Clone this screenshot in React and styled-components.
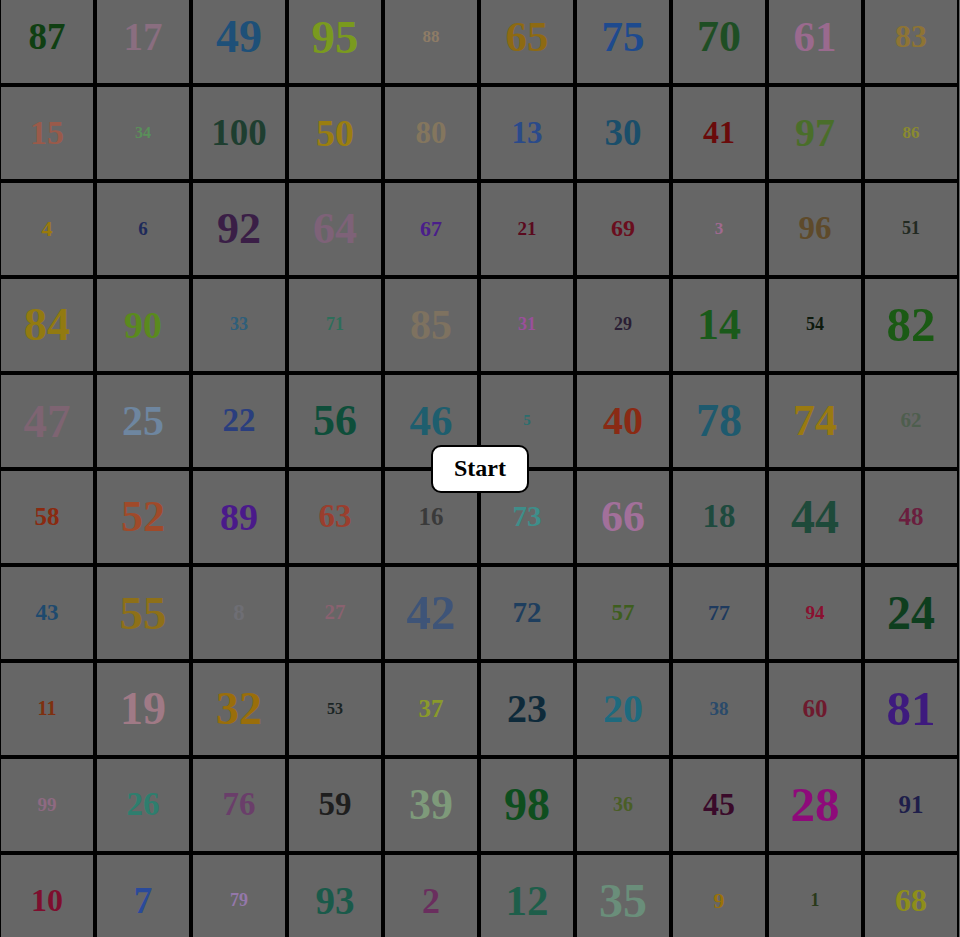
import React from 'react';
import styled, { createGlobalStyle } from 'styled-components';

const GlobalStyle = createGlobalStyle`
    html, body {
        margin: 0;
        padding: 0;
        height: 100%;
        overflow: hidden;
        background: #666666;
    }
`;

// [number, font size, colour] for each cell, row by row
const cells = [
    [87, 37, '#0f3f12'], [17, 39, '#8a6e80'], [49, 46, '#1e5078'], [95, 47, '#7a9a1e'], [88, 17, '#8e7c66'],
    [65, 43, '#8e6a12'], [75, 43, '#1e4a8e'], [70, 44, '#1e4e24'], [61, 43, '#9a6a8e'], [83, 32, '#8e7434'],

    [15, 34, '#9a5a4a'], [34, 16, '#5a905a'], [100, 37, '#1e3e30'], [50, 38, '#9a7e10'], [80, 31, '#84765e'],
    [13, 31, '#2a4a8a'], [30, 37, '#1a4e6a'], [41, 32, '#6a0a0a'], [97, 40, '#4a6e2a'], [86, 17, '#8a8a30'],

    [4, 22, '#9a7a0a'], [6, 19, '#1e2a5a'], [92, 44, '#3a1e46'], [64, 44, '#7e6278'], [67, 22, '#4a1e8a'],
    [21, 19, '#5a0a1e'], [69, 24, '#6a0e1e'], [3, 17, '#a06a90'], [96, 33, '#5e4a2a'], [51, 18, '#222a22'],

    [84, 46, '#927a10'], [90, 38, '#5a8a1e'], [33, 18, '#2e5e7a'], [71, 18, '#2e6e5a'], [85, 42, '#7e7260'],
    [31, 18, '#9a509a'], [29, 18, '#2a1e34'], [14, 44, '#1a5a1a'], [54, 18, '#0e1a0e'], [82, 49, '#1a5a14'],

    [47, 47, '#7e6472'], [25, 42, '#6e86a0'], [22, 33, '#2a3e7e'], [56, 44, '#0e4e3a'], [46, 43, '#1e5e6e'],
    [5, 15, '#2a6e6e'], [40, 40, '#8a2a14'], [78, 46, '#1e5a6e'], [74, 44, '#9a7a10'], [62, 21, '#4e5e4e'],

    [58, 25, '#8a2a10'], [52, 44, '#a04a2a'], [89, 38, '#4a1a8a'], [63, 33, '#9a3e2e'], [16, 25, '#3a3a3a'],
    [73, 29, '#3e8e8a'], [66, 44, '#a2709a'], [18, 33, '#1e4a3e'], [44, 48, '#1e4a3a'], [48, 25, '#6a1e3e'],

    [43, 23, '#1e4a6e'], [55, 47, '#8e7018'], [8, 23, '#6e6e74'], [27, 21, '#8a6270'], [42, 49, '#3e5478'],
    [72, 29, '#1e3e5e'], [57, 23, '#3e5e1e'], [77, 22, '#1e3a5e'], [94, 19, '#8a1030'], [24, 48, '#0e3e1e'],

    [11, 20, '#7e3010'], [19, 46, '#a07a86'], [32, 46, '#9a6e0a'], [53, 16, '#1a2424'], [37, 25, '#8a9a2a'],
    [23, 40, '#0e2a3a'], [20, 40, '#1e6a7e'], [38, 19, '#2a4a6a'], [60, 25, '#6e1a2e'], [81, 49, '#3e1a7e'],

    [99, 19, '#8e6a82'], [26, 33, '#2e7e6e'], [76, 33, '#6a3e6a'], [59, 33, '#1e1e1e'], [39, 44, '#7e9a7a'],
    [98, 46, '#0e4e1e'], [36, 20, '#4a5e26'], [45, 32, '#3a0a2a'], [28, 49, '#8e0a7a'], [91, 25, '#1e1e4a'],

    [10, 32, '#7e0e2e'], [7, 37, '#2a4a9a'], [79, 18, '#9478aa'], [93, 39, '#1a5a4a'], [2, 36, '#6a2e5e'],
    [12, 43, '#1e5e4a'], [35, 48, '#6a8e7a'], [9, 22, '#9a720a'], [1, 18, '#2a3a1a'], [68, 32, '#8e8e1a'],
];

const Page = styled.div`
    position: relative;
    height: 100vh;
    display: flex;
    align-items: center;
    justify-content: center;
    overflow: hidden;
    font-family: "Liberation Serif", "Times New Roman", serif;
`;

const Board = styled.div`
    flex: none;
    margin-left: -2px;
    display: grid;
    grid-template-columns: repeat(10, 96px);
    grid-template-rows: repeat(10, 96px);
`;

const Cell = styled.div`
    box-sizing: border-box;
    border: 2px solid #000;
    background: #666666;
    display: flex;
    align-items: center;
    justify-content: center;
    font-weight: bold;
    font-size: ${p => p.size}px;
    color: ${p => p.color};
    user-select: none;
`;

const Overlay = styled.div`
    position: absolute;
    inset: 0;
    display: flex;
    align-items: center;
    justify-content: center;
`;

const StartButton = styled.button`
    box-sizing: border-box;
    width: 98px;
    height: 48px;
    padding: 0;
    border: 2px solid #000;
    border-radius: 10px;
    background: #fff;
    color: #000;
    font-family: "Liberation Serif", "Times New Roman", serif;
    font-weight: bold;
    font-size: 24px;
    cursor: pointer;
`;

const App = () => (
    <Page>
        <GlobalStyle />
        <Board>
            {cells.map(([n, size, color]) => (
                <Cell key={n} size={size} color={color}>
                    {n}
                </Cell>
            ))}
        </Board>
        <Overlay>
            <StartButton>Start</StartButton>
        </Overlay>
    </Page>
);

export default App;
